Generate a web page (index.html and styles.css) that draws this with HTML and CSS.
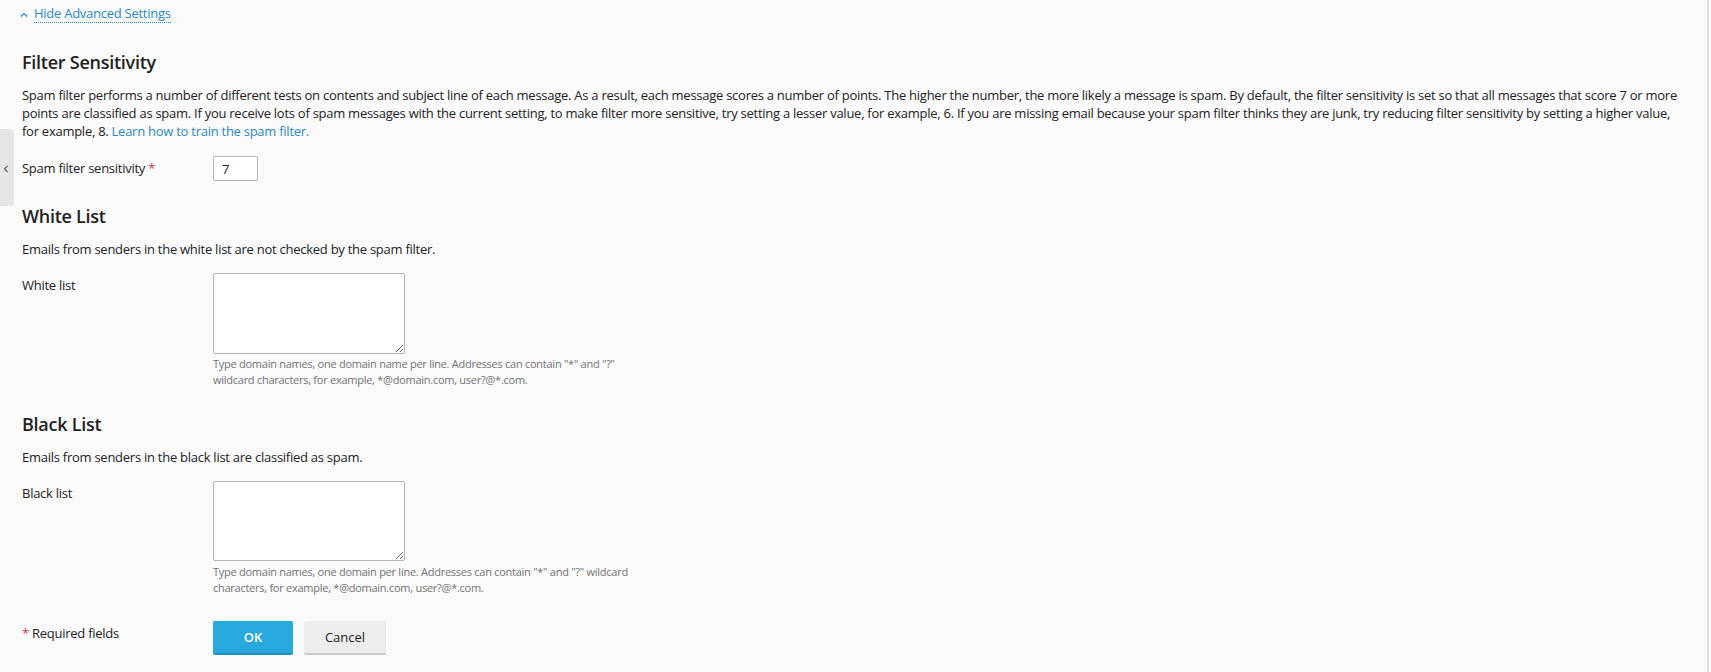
FILE: index.html
```html
<!DOCTYPE html>
<html lang="en">
<head>
<meta charset="utf-8">
<title>Spam Filter Settings</title>
<link rel="stylesheet" href="styles.css">
</head>
<body>
<div class="side-tab"><svg width="6" height="8" viewBox="0 0 6 8"><path d="M4.5 0.8 L1.5 4 L4.5 7.2" fill="none" stroke="#555" stroke-width="1.1"/></svg></div>
<main class="page">
  <div class="toggle">
    <svg class="toggle-icon" width="8" height="6" viewBox="0 0 8 6"><path d="M1 4.5 L4 1.5 L7 4.5" fill="none" stroke="#2b8ac4" stroke-width="1.1"/></svg>
    <a class="toggle-link" href="#">Hide Advanced Settings</a>
  </div>

  <section class="section first">
    <h2 class="heading">Filter Sensitivity</h2>
    <p class="desc">Spam filter performs a number of different tests on contents and subject line of each message. As a result, each message scores a number of points. The higher the number, the more likely a message is spam. By default, the filter sensitivity is set so that all messages that score 7 or more points are classified as spam. If you receive lots of spam messages with the current setting, to make filter more sensitive, try setting a lesser value, for example, 6. If you are missing email because your spam filter thinks they are junk, try reducing filter sensitivity by setting a higher value, for example, 8. <a href="#" class="link">Learn how to train the spam filter.</a></p>
    <div class="row row-first">
      <label class="label">Spam filter sensitivity <span class="req">*</span></label>
      <div class="field"><input class="input-small" type="text" value="7"></div>
    </div>
  </section>

  <section class="section">
    <h2 class="heading">White List</h2>
    <p class="desc">Emails from senders in the white list are not checked by the spam filter.</p>
    <div class="row">
      <label class="label">White list</label>
      <div class="field">
        <textarea class="area"></textarea>
        <div class="hint">Type domain names, one domain name per line. Addresses can contain "*" and "?" wildcard characters, for example, *@domain.com, user?@*.com.</div>
      </div>
    </div>
  </section>

  <section class="section section-black">
    <h2 class="heading">Black List</h2>
    <p class="desc">Emails from senders in the black list are classified as spam.</p>
    <div class="row">
      <label class="label">Black list</label>
      <div class="field">
        <textarea class="area area-black"></textarea>
        <div class="hint hint-black">Type domain names, one domain per line. Addresses can contain "*" and "?" wildcard characters, for example, *@domain.com, user?@*.com.</div>
      </div>
    </div>
  </section>

  <div class="row actions">
    <div class="label req-note"><span class="req">*</span> Required fields</div>
    <div class="buttons">
      <button class="btn btn-primary" type="button">OK</button>
      <button class="btn btn-default" type="button">Cancel</button>
    </div>
  </div>
</main>
</body>
</html>
```

FILE: styles.css
```css
html, body {
  margin: 0;
  padding: 0;
  background: #ffffff;
}
body {
  font-family: "Open Sans", "Noto Sans", sans-serif;
  font-size: 13px;
  line-height: 18px;
  letter-spacing: -0.02em;
  color: #222222;
}
.page {
  width: 1709px;
  box-sizing: border-box;
  min-height: 672px;
  background: #fafafa;
  border-right: 2px solid #e1e1e1;
  padding: 4px 20px 0 22px;
}
.side-tab {
  position: absolute;
  left: 0;
  top: 129px;
  width: 14px;
  height: 77px;
  background: #e6e6e6;
  border-radius: 0 4px 4px 0;
  display: flex;
  align-items: center;
  justify-content: center;
  padding-right: 2px;
  box-sizing: border-box;
  padding-top: 2px;
}
.toggle {
  display: flex;
  align-items: center;
  height: 19px;
}
.toggle-icon {
  margin-left: -2px;
  margin-right: 6px;
  margin-top: 2px;
}
.toggle-link {
  color: #2b8ac4;
  text-decoration: none;
  border-bottom: 1px dotted #2b8ac4;
  line-height: 18px;
}
.section.first {
  margin-top: 27px;
}
.section {
  margin-top: 23px;
}
.section-black {
  margin-top: 25px;
}
.heading {
  margin: 0 0 12px 0;
  font-size: 18px;
  font-weight: 600;
  line-height: 24px;
  color: #222222;
}
.desc {
  margin: 0;
}
.link {
  color: #2b8ac4;
  text-decoration: none;
}
.row {
  display: flex;
  align-items: flex-start;
  margin-top: 15px;
}
.row-first {
  margin-top: 16px;
}
.label {
  width: 191px;
  flex: none;
  padding-top: 3px;
}
.req {
  color: #d8304f;
}
.field {
  display: flex;
  flex-direction: column;
}
.input-small {
  width: 45px;
  height: 25px;
  box-sizing: border-box;
  border: 1px solid #b5b5b5;
  border-radius: 2px;
  background: #ffffff;
  font-family: "Open Sans", sans-serif;
  font-size: 13px;
  padding: 0 8px;
  color: #222;
  margin: 0;
}
.area {
  width: 192px;
  height: 81px;
  box-sizing: border-box;
  border: 1px solid #b5b5b5;
  border-radius: 2px;
  background: #ffffff;
  margin: 0;
  resize: both;
  font-family: "Open Sans", sans-serif;
}
.area-black {
  height: 80px;
}
.hint {
  width: 440px;
  margin-top: 2px;
  font-size: 11px;
  line-height: 15.5px;
  color: #737373;
}
.hint-black {
  margin-top: 3px;
  line-height: 16px;
}
.actions {
  margin-top: 25px;
}
.req-note {
  padding-top: 3px;
}
.buttons {
  display: flex;
  gap: 11px;
}
.btn {
  height: 34px;
  box-sizing: border-box;
  border: 0;
  border-radius: 2px;
  font-family: "Open Sans", sans-serif;
  font-size: 13px;
  font-weight: 600;
  cursor: pointer;
  padding: 0;
}
.btn-primary {
  width: 80px;
  background: #28a9de;
  border-bottom: 2px solid #1f8ec0;
  color: #ffffff;
}
.btn-default {
  width: 82px;
  background: #ececec;
  border-bottom: 2px solid #c8c8c8;
  color: #222222;
  font-weight: 400;
}
```
